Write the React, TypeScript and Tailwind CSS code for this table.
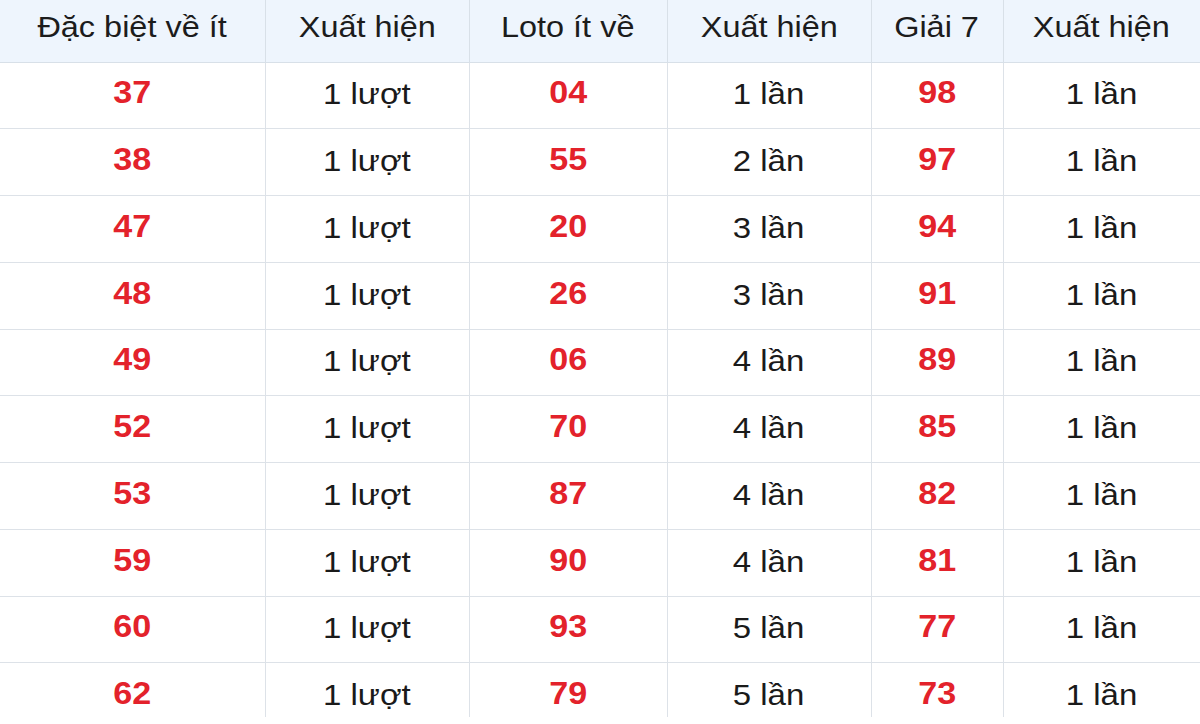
import React from "react";

const rows: [string, string, string, string, string, string][] = [
  ["37", "1 lượt", "04", "1 lần", "98", "1 lần"],
  ["38", "1 lượt", "55", "2 lần", "97", "1 lần"],
  ["47", "1 lượt", "20", "3 lần", "94", "1 lần"],
  ["48", "1 lượt", "26", "3 lần", "91", "1 lần"],
  ["49", "1 lượt", "06", "4 lần", "89", "1 lần"],
  ["52", "1 lượt", "70", "4 lần", "85", "1 lần"],
  ["53", "1 lượt", "87", "4 lần", "82", "1 lần"],
  ["59", "1 lượt", "90", "4 lần", "81", "1 lần"],
  ["60", "1 lượt", "93", "5 lần", "77", "1 lần"],
  ["62", "1 lượt", "79", "5 lần", "73", "1 lần"],
];

const headers = ["Đặc biệt về ít", "Xuất hiện", "Loto ít về", "Xuất hiện", "Giải 7", "Xuất hiện"];
const widths = ["w-[265px]", "w-[204px]", "w-[198px]", "w-[204px]", "w-[132px]", "w-[197px]"];

export default function App() {
  return (
    <div
      className="w-[1200px] h-[724px] bg-white overflow-hidden"
      style={{ fontFamily: '"Liberation Sans", Arial, sans-serif' }}
    >
      <div className="h-[717px] overflow-hidden">
        <table className="w-[1200px] border-collapse table-fixed leading-none">
          <colgroup>
            {widths.map((w, i) => (
              <col key={i} className={w} />
            ))}
          </colgroup>
          <thead>
            <tr className="h-[62px] bg-[#eef5fd]">
              {headers.map((h, i) => (
                <th
                  key={i}
                  className={
                    "font-normal text-[29.5px] text-[#1c1c1c] text-center align-middle pb-[8px] border-b border-[#d8e0e8] " +
                    (i > 0 ? "border-l border-l-[#d8e0e8]" : "")
                  }
                >
                  <span className="inline-block scale-x-[1.1]">{h}</span>
                </th>
              ))}
            </tr>
          </thead>
          <tbody>
            {rows.map((r, ri) => (
              <tr key={ri} className="h-[66.75px]">
                {r.map((c, ci) => {
                  const num = ci % 2 === 0;
                  return (
                    <td
                      key={ci}
                      className={
                        "text-center align-middle border-b border-[#dde2e8] " +
                        (num
                          ? "text-[31px] font-bold text-[#e3222b] pb-[5px] "
                          : "text-[30px] text-[#1a1a1a] pb-[2px] ") +
                        (ci > 0 ? "border-l border-l-[#dde2e8]" : "")
                      }
                    >
                      <span className="inline-block scale-x-[1.1]">{c}</span>
                    </td>
                  );
                })}
              </tr>
            ))}
          </tbody>
        </table>
      </div>
    </div>
  );
}
